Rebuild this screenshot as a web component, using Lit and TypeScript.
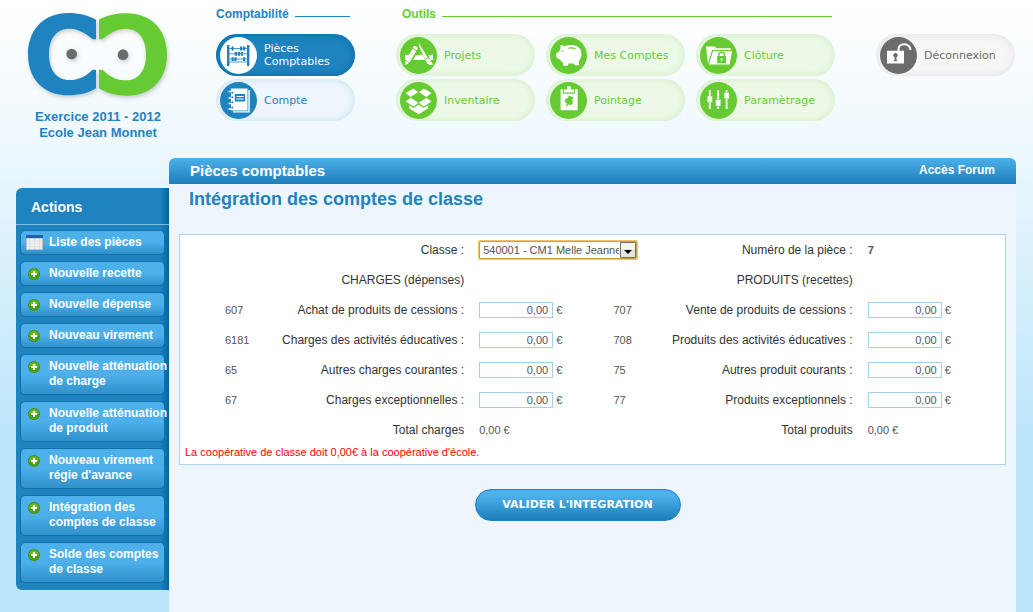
import { LitElement, html, svg, css, TemplateResult } from "lit";
import { customElement, property, state } from "lit/decorators.js";
import { classMap } from "lit/directives/class-map.js";

/* Pictograms are drawn in white (or in the tone of the pill) inside a 37px disc. */
const icons: Record<string, TemplateResult> = {
  abacus: svg`
    <path d="M7 8h2.4v21H7zM27 8h2.4v21H27z"/>
    <path d="M9 11h18v1H9zM9 16.3h18v1H9zM9 21.6h18v1H9zM9 24.6h18v1H9z" opacity=".8"/>
    <path d="M11.5 9.6h2.2v3.8h-2.2zM20 9.6h2.2v3.8H20zM23 9.6h2.2v3.8H23zM14.8 14.9H17v3.8h-2.2zM17.8 14.9H20v3.8h-2.2zM20.8 14.9H23v3.8h-2.2zM11.5 20.2h2.2V24h-2.2zM14.4 20.2h2.2V24h-2.2zM23 20.2h2.2V24H23z"/>`,
  notebook: svg`
    <path d="M11 6.5h16.5v22H11z"/>
    <path d="M28.3 8h1.5v22.4H13v-1.2h15.3z"/>
    <g fill="none" stroke="#fff" stroke-width="1.3"><path d="M8.5 9.5h4M8.5 16h4M8.5 21.5h4M8.5 27h4"/></g>
    <g fill="#1f83bf"><circle cx="12.3" cy="10.8" r="1"/><circle cx="12.3" cy="15.2" r="1"/><circle cx="12.3" cy="20.2" r="1"/><circle cx="12.3" cy="25.4" r="1"/>
    <path d="M14.8 12h10.4v7.6H14.8z"/></g>
    <path d="M16.4 14h7.2v1h-7.2zM16.4 16.6h7.2v1h-7.2z"/>`,
  tools: svg`
    <path d="M5 17.6l2 .8 2.4-.8 2.6.8 2.5-.8 3 .8 3.5-.8 3 .8 2.8-.8 3 .8 3.2-.8V23H5z"/>
    <path d="M16.2 7.2l4.6 2.6L11 26.4l-5.4 3 .2-5.8z" fill="#66cb33"/>
    <path d="M17.8 6.2l4-1.5L33 28l-5 2z" fill="#66cb33"/>
    <path d="M13.6 9.6c1-1.6 4.8.4 3.9 2.2l-.8 1.4-3.9-2.2zM12.4 11.8l3.8 2.2-6.5 11.2-3.8-2.2zM5.6 23.6l3.6 2.1-3.8 2.6z"/>
    <path d="M18.6 5.6l2.2 3.6 6.8 11.4-2.6 1.4-5.4-11.6z"/>
    <path d="M25.4 22.8l2.8-1.5c2.6 1.4 3 4.6 5 6.2-3 1.2-6.4.3-7.8-4.7z"/>`,
  box: svg`
    <path d="M13.4 6.4l4.7 3.8-7.4 4.9-5-4.1zM23.8 6.4l-4.7 3.8 7.4 4.9 5-4.1z"/>
    <path d="M10.7 15.8l7.7 4.9-4.9 3.9-7.8-5zM26.5 15.8l-7.7 4.9 4.9 3.9 7.8-5z"/>
    <path d="M9 23.3l4.6 2.8 5-3.7 5 3.7 4.6-2.8v2.9l-9.6 6-9.6-6z"/>`,
  pig: svg`
    <path d="M10.8 7.7l3.9 1.5C16.6 8.4 19 8 21.5 8c6 0 10 3.600 10 9 0 3-1.100 5.100-2.500 6.700V28.300h-4.400l-.6-1.800h-5.500l-.8 2.300h-4.200l-.7-3.500c-1.500-.8-2.600-2-3.300-3.300l-2.500-.8c-1-1.700-1-3.400-.6-5.200l2.300-1 1.600-2.700z"/>
    <path d="M18.6 12c2.500-.7 4.500-.5 6.700.5l.5-1.300c-2.400-1-4.800-1.200-7.400-.5z" fill="#66cb33"/>
    <circle cx="12.2" cy="14.3" r=".8" fill="#66cb33"/>`,
  clipboard: svg`
    <path d="M10.6 7.3h17v21h-17z"/>
    <path d="M13 7h12v4.700H13z" fill="#66cb33"/>
    <path d="M13.900 7.500h3.300V4.300h3.600v3.200h3.300v2.900H13.900z"/>
    <path d="M19 13.500l4.400 2-1 2.200.5 3.600-2 2-2.200-1-2.700 3.300.8-4.300-2-1.400.3-2.700 2.700-1.200z" fill="#66cb33"/>`,
  folder: svg`
    <path d="M6 9.600h9l1.200 1.600h14.600v4H14L9 27.600H8z"/>
    <path d="M12.600 13.500h20.200l-2.800 14.700H8z" stroke="#66cb33" stroke-width="1.200"/>
    <path d="M17.200 19h8.800v7.300h-8.800z" fill="#66cb33"/>
    <path d="M18.800 19.400v-1.400a2.800 2.800 0 0 1 5.600 0v1.400" fill="none" stroke="#66cb33" stroke-width="1.400"/>
    <circle cx="21.600" cy="22.200" r="1"/><path d="M21.200 22.400h.8v2.200h-.8z"/>`,
  sliders: svg`
    <path d="M8.900 8h1.800v19H8.900zM17.300 8h1.800v19h-1.800zM25.700 8h1.800v19h-1.800z"/>
    <path d="M7.200 14h5.200v6.400H7.200zM15.600 17.600h5.200V24h-5.200zM24 10.400h5.200v6.400H24z" stroke="#66cb33" stroke-width=".5"/>`,
  unlock: svg`
    <path d="M7 13.700h17v12.800H7z"/>
    <path d="M18.500 14v-1.800c0-3 2.400-5 5.600-5s6 1.800 6.400 5.800" fill="none" stroke="#fff" stroke-width="2"/>
    <circle cx="15.500" cy="18.300" r="2.200" fill="#6c6c6c"/><path d="M14.600 19.500h1.800v4.700h-1.800zM13.800 22.800h3.400v1.400h-3.400z" fill="#6c6c6c"/>`,
};

@customElement("nav-pill")
class NavPill extends LitElement {
  @property() icon = "";
  @property() label = "";
  @property() tone = "green";

  static styles = css`
    :host { display: block; }
    .pill {
      display: flex;
      align-items: center;
      gap: 7px;
      box-sizing: border-box;
      width: 139px;
      height: 42px;
      padding-left: 4px;
      border-radius: 21px;
      font: 11px/13px Verdana, "DejaVu Sans", sans-serif;
      text-decoration: none;
    }
    .disc { flex: none; width: 37px; height: 37px; border-radius: 50%; fill: #fff; }
    .green { color: #66cb33; background: #edf9e8; box-shadow: inset 0 0 8px #cfecc0; }
    .green .disc { background: #66cb33; }
    .blue { color: #1f83bf; background: #eef6fc; box-shadow: inset 0 0 8px #c4dfef; }
    .blue .disc { background: #1f83bf; }
    .active { color: #fff; background: #1f83bf; box-shadow: inset 0 0 8px #0468a6; }
    .active .disc { background: #fff; fill: #1f83bf; }
    .gray { color: #6c6c6c; background: #f6f6f6; box-shadow: inset 0 0 8px #e0e0e0; }
    .gray .disc { background: #6c6c6c; }
  `;

  render() {
    return html`<a href="#" class=${classMap({ pill: true, [this.tone]: true })}>
      <svg class="disc" viewBox="0 0 37 37" aria-hidden="true">${icons[this.icon]}</svg>
      <span>${this.label}</span>
    </a>`;
  }
}

interface Account {
  code: string;
  label: string;
}

@customElement("app-root")
class AppRoot extends LitElement {
  @state() private classe = "540001 - CM1 Melle Jeanne";

  private tools = [
    ["tools", "Projets"],
    ["pig", "Mes Comptes"],
    ["folder", "Clôture"],
    ["box", "Inventaire"],
    ["clipboard", "Pointage"],
    ["sliders", "Paramètrage"],
  ];

  private actions = [
    "Nouvelle recette",
    "Nouvelle dépense",
    "Nouveau virement",
    "Nouvelle atténuation\nde charge",
    "Nouvelle atténuation\nde produit",
    "Nouveau virement\nrégie d'avance",
    "Intégration des\ncomptes de classe",
    "Solde des comptes\nde classe",
  ];

  private accounts: [Account, Account][] = [
    [{ code: "607", label: "Achat de produits de cessions :" }, { code: "707", label: "Vente de produits de cessions :" }],
    [{ code: "6181", label: "Charges des activités éducatives :" }, { code: "708", label: "Produits des activités éducatives :" }],
    [{ code: "65", label: "Autres charges courantes :" }, { code: "75", label: "Autres produit courants :" }],
    [{ code: "67", label: "Charges exceptionnelles :" }, { code: "77", label: "Produits exceptionnels :" }],
  ];

  static styles = css`
    :host {
      display: flex;
      flex-direction: column;
      min-height: 100vh;
      background: #bde6fa linear-gradient(#fff, #f0f9fe 130px, #bde6fa 430px) no-repeat;
      font-family: Arial, "Liberation Sans", sans-serif;
      font-size: 12px;
      color: #333;
    }
    a { color: inherit; text-decoration: none; }
    h1, h2, p, ul { margin: 0; padding: 0; }
    ul { list-style: none; }

    .top { display: flex; gap: 41px; box-sizing: border-box; min-height: 158px; padding: 6px 18px 0 0; }
    .brand {
      box-sizing: border-box;
      flex: none;
      width: 175px;
      padding: 5px 0 0 21px;
      text-align: center;
      font-size: 13px;
      font-weight: bold;
      line-height: 16px;
      color: #1f83bf;
    }
    .logo { display: block; width: 144px; height: 88px; margin: 0 auto 10px; filter: drop-shadow(1px 2px 2px rgba(0, 0, 0, 0.2)); }
    .group-title { display: flex; align-items: center; gap: 6px; margin-bottom: 12px; font-size: 12px; line-height: 16px; }
    .group-title::after { content: ""; flex: 1; height: 1px; margin-top: 4px; background: currentColor; }
    .compta .group-title { color: #1f83bf; padding-right: 5px; }
    .outils .group-title { color: #66cb33; padding: 0 3px 0 6px; }
    .pills { display: grid; gap: 3px 11px; }
    .pills.three { grid-template-columns: repeat(3, auto); }
    .session { margin-left: auto; padding-top: 28px; }

    .body { display: flex; flex: 1; align-items: stretch; padding: 0 17px 0 16px; }
    .side {
      flex: none;
      align-self: flex-start;
      box-sizing: border-box;
      width: 153px;
      margin-top: 30px;
      padding-bottom: 7px;
      border-radius: 6px 0 0 6px;
      background: linear-gradient(to left, #0465a2, #1f83bf 9px);
      color: #fff;
    }
    .side-title { padding: 10px 15px 8px; border-bottom: 1px solid #85b9dc; font-size: 14px; line-height: 18px; }
    .actions { display: grid; grid-template-columns: minmax(0, 1fr); gap: 6px; padding: 5px 4px 0; }
    .action {
      display: grid;
      grid-template-columns: 18px minmax(0, 1fr);
      gap: 6px;
      box-sizing: border-box;
      min-height: 25px;
      padding: 4px 0 4px 4px;
      border: 1px solid #1270a9;
      border-radius: 5px;
      background: linear-gradient(#4db0ea 50%, #2f90ca);
      font-weight: bold;
      line-height: 15px;
      white-space: pre;
    }
    .action.tall { min-height: 41px; }
    .action svg { display: block; margin: 0 auto; }

    .main { flex: 1; min-width: 0; background: #eef6fd; border-top-right-radius: 6px; border-top-left-radius: 6px; }
    .bar {
      display: flex;
      justify-content: space-between;
      padding: 0 21px;
      border-radius: 6px 6px 0 0;
      background: linear-gradient(#4db0ea, #1b7ebb);
      color: #fff;
      font-weight: bold;
      line-height: 26px;
    }
    .bar h2 { font-size: 15px; line-height: 26px; }
    .bar a { line-height: 24px; }
    .content { padding: 5px 10px 20px; }
    .content h1 { padding-left: 10px; font-size: 18px; line-height: 20px; color: #1f83bf; }
    .sheet { margin-top: 25px; padding-bottom: 4px; border: 1px solid #b0d4ea; background: #fff; }
    .grid {
      display: grid;
      grid-template-columns: 40px minmax(0, 4fr) minmax(0, 3fr) 40px minmax(0, 4fr) minmax(0, 3fr);
      grid-auto-rows: 30px;
      align-items: center;
      padding: 0 3px 0 45px;
    }
    .code, .value { font-size: 11px; color: #555; }
    .value { padding-left: 15px; white-space: nowrap; }
    .label { text-align: right; white-space: nowrap; }
    .first { grid-column: 2; }
    .second { grid-column: 5; }
    .charge { grid-column: 1; }
    .produit { grid-column: 4; }
    .strong { font-weight: bold; }
    .amount-cell { display: flex; align-items: center; gap: 3px; }
    .amount {
      box-sizing: border-box;
      width: 74px;
      height: 16px;
      padding: 0 4px;
      border: 1px solid #a5cfea;
      background: #fff;
      font: 11px/14px Arial, "Liberation Sans", sans-serif;
      color: #555;
      text-align: right;
    }
    .picker { display: inline-grid; align-items: center; vertical-align: middle; }
    .picker > * { grid-area: 1 / 1; }
    .picker select {
      appearance: none;
      box-sizing: border-box;
      width: 158px;
      height: 18px;
      padding: 0 17px 0 3px;
      border: 1px solid #c9a24c;
      border-radius: 1px;
      outline: 1px solid #f2c461;
      background: #fff;
      font: 11px/16px Arial, "Liberation Sans", sans-serif;
      color: #555;
    }
    .picker svg { justify-self: end; margin-right: 1px; pointer-events: none; }
    .debt { padding-left: 5px; font-size: 11px; line-height: 15px; color: #f00; }
    .submit-row { display: flex; justify-content: center; padding: 24px 30px 0 0; }
    .submit {
      min-width: 206px;
      height: 32px;
      border: 1px solid #1f83bf;
      border-radius: 16px;
      background: linear-gradient(#4db0ea 20%, #1b7ebb);
      color: #fff;
      font: bold 11px/14px Verdana, "DejaVu Sans", sans-serif;
    }
  `;

  private plus() {
    return html`<svg width="14" height="15" viewBox="0 0 14 15" aria-hidden="true">
      <circle cx="7" cy="8" r="6" fill="#3f9212"/>
      <circle cx="7" cy="8" r="4.8" fill="#66bb1e"/>
      <path d="M2.2 8a4.8 4.8 0 0 0 9.6 0z" fill="#4a9f16"/>
      <path d="M6 5h2v2h2v2H8v2H6V9H4V7h2z" fill="#fff"/>
    </svg>`;
  }

  private sheetIcon() {
    return html`<svg width="17" height="15" viewBox="0 0 17 16" preserveAspectRatio="none" aria-hidden="true">
      <path d="M0 0h17v16H0z" fill="#f3f3f3"/>
      <path d="M0 0h17v3.5H0z" fill="#245fa8"/>
      <path d="M0 6.5h17M0 9.5h17M0 12.5h17M3.5 4v12M8.5 4v12M13.5 4v12" stroke="#dcdedf"/>
      <path d="M.5 3.5v12h16v-12" fill="none" stroke="#b9bfc4"/>
    </svg>`;
  }

  private accountCells(a: Account, side: "charge" | "produit") {
    const id = `compte-${a.code}`;
    return html`
      <span class="code ${side}">${a.code}</span>
      <label class="label" for=${id}>${a.label}</label>
      <span class="value amount-cell"><input class="amount" id=${id} type="text" .value=${"0,00"}><span>€</span></span>`;
  }

  render() {
    return html`
      <header class="top">
        <div class="brand">
          <svg class="logo" viewBox="78 34 432 264" role="img" aria-label="Logo">
            <path fill="#1f83bf" d="M288 60C262 46 235 40 205 40C132 40 84 90 84 163C84 238 130 287 205 287C237 287 264 281 288 266V210H278C258 230 236 241 208 241C170 241 147 212 147 163C147 115 170 87 208 87C236 87 258 102 278 119H288Z"/>
            <path fill="#66cb33" d="M297 60C323 46 350 41 380 41C453 41 501 90 501 165C501 238 455 288 380 288C348 288 321 281 297 266V210H307C327 230 349 242 377 242C415 242 438 213 438 165C438 115 415 87 377 87C349 87 327 102 307 119H297Z"/>
            <circle cx="215" cy="163" r="16" fill="#6c6c6c"/>
            <circle cx="369" cy="165" r="16" fill="#6c6c6c"/>
          </svg>
          <p>Exercice 2011 - 2012</p>
          <p>Ecole Jean Monnet</p>
        </div>
        <nav class="compta">
          <h2 class="group-title">Comptabilité</h2>
          <div class="pills">
            <nav-pill icon="abacus" tone="active" label="Pièces Comptables"></nav-pill>
            <nav-pill icon="notebook" tone="blue" label="Compte"></nav-pill>
          </div>
        </nav>
        <nav class="outils">
          <h2 class="group-title">Outils</h2>
          <div class="pills three">
            ${this.tools.map(([icon, label]) => html`<nav-pill .icon=${icon} .label=${label}></nav-pill>`)}
          </div>
        </nav>
        <div class="session">
          <nav-pill icon="unlock" tone="gray" label="Déconnexion"></nav-pill>
        </div>
      </header>

      <div class="body">
        <aside class="side">
          <h2 class="side-title">Actions</h2>
          <ul class="actions">
            <li><a class="action" href="#">${this.sheetIcon()}<span>Liste des pièces</span></a></li>
            ${this.actions.map(
              (a) => html`<li><a class=${classMap({ action: true, tall: a.includes("\n") })} href="#">${this.plus()}<span>${a}</span></a></li>`
            )}
          </ul>
        </aside>

        <main class="main">
          <div class="bar"><h2>Pièces comptables</h2><a href="#">Accès Forum</a></div>
          <form class="content" @submit=${(e: Event) => e.preventDefault()}>
            <h1>Intégration des comptes de classe</h1>
            <div class="sheet">
              <div class="grid">
                <label class="label first" for="classe">Classe :</label>
                <span class="value">
                  <span class="picker">
                    <select id="classe" @change=${(e: Event) => (this.classe = (e.target as HTMLSelectElement).value)}>
                      <option>${this.classe}</option>
                    </select>
                    <svg width="16" height="16" viewBox="0 0 16 16" aria-hidden="true">
                      <path d="M.5.5h15v15H.5z" fill="#e4e4e4" stroke="#707070"/>
                      <path d="M1 1h14v6H1z" fill="#f4f4f4"/>
                      <path d="M4 8h8l-4 4z" fill="#000"/>
                    </svg>
                  </span>
                </span>
                <span class="label second">Numéro de la pièce :</span>
                <span class="value strong">7</span>

                <span class="label first">CHARGES (dépenses)</span>
                <span class="label second">PRODUITS (recettes)</span>

                ${this.accounts.map(
                  ([charge, produit]) => html`${this.accountCells(charge, "charge")}${this.accountCells(produit, "produit")}`
                )}

                <span class="label first">Total charges</span>
                <span class="value">0,00 €</span>
                <span class="label second">Total produits</span>
                <span class="value">0,00 €</span>
              </div>
              <p class="debt">La coopérative de classe doit 0,00€ à la coopérative d'école.</p>
            </div>
            <div class="submit-row"><button class="submit" type="submit">VALIDER L'INTEGRATION</button></div>
          </form>
        </main>
      </div>
    `;
  }
}
